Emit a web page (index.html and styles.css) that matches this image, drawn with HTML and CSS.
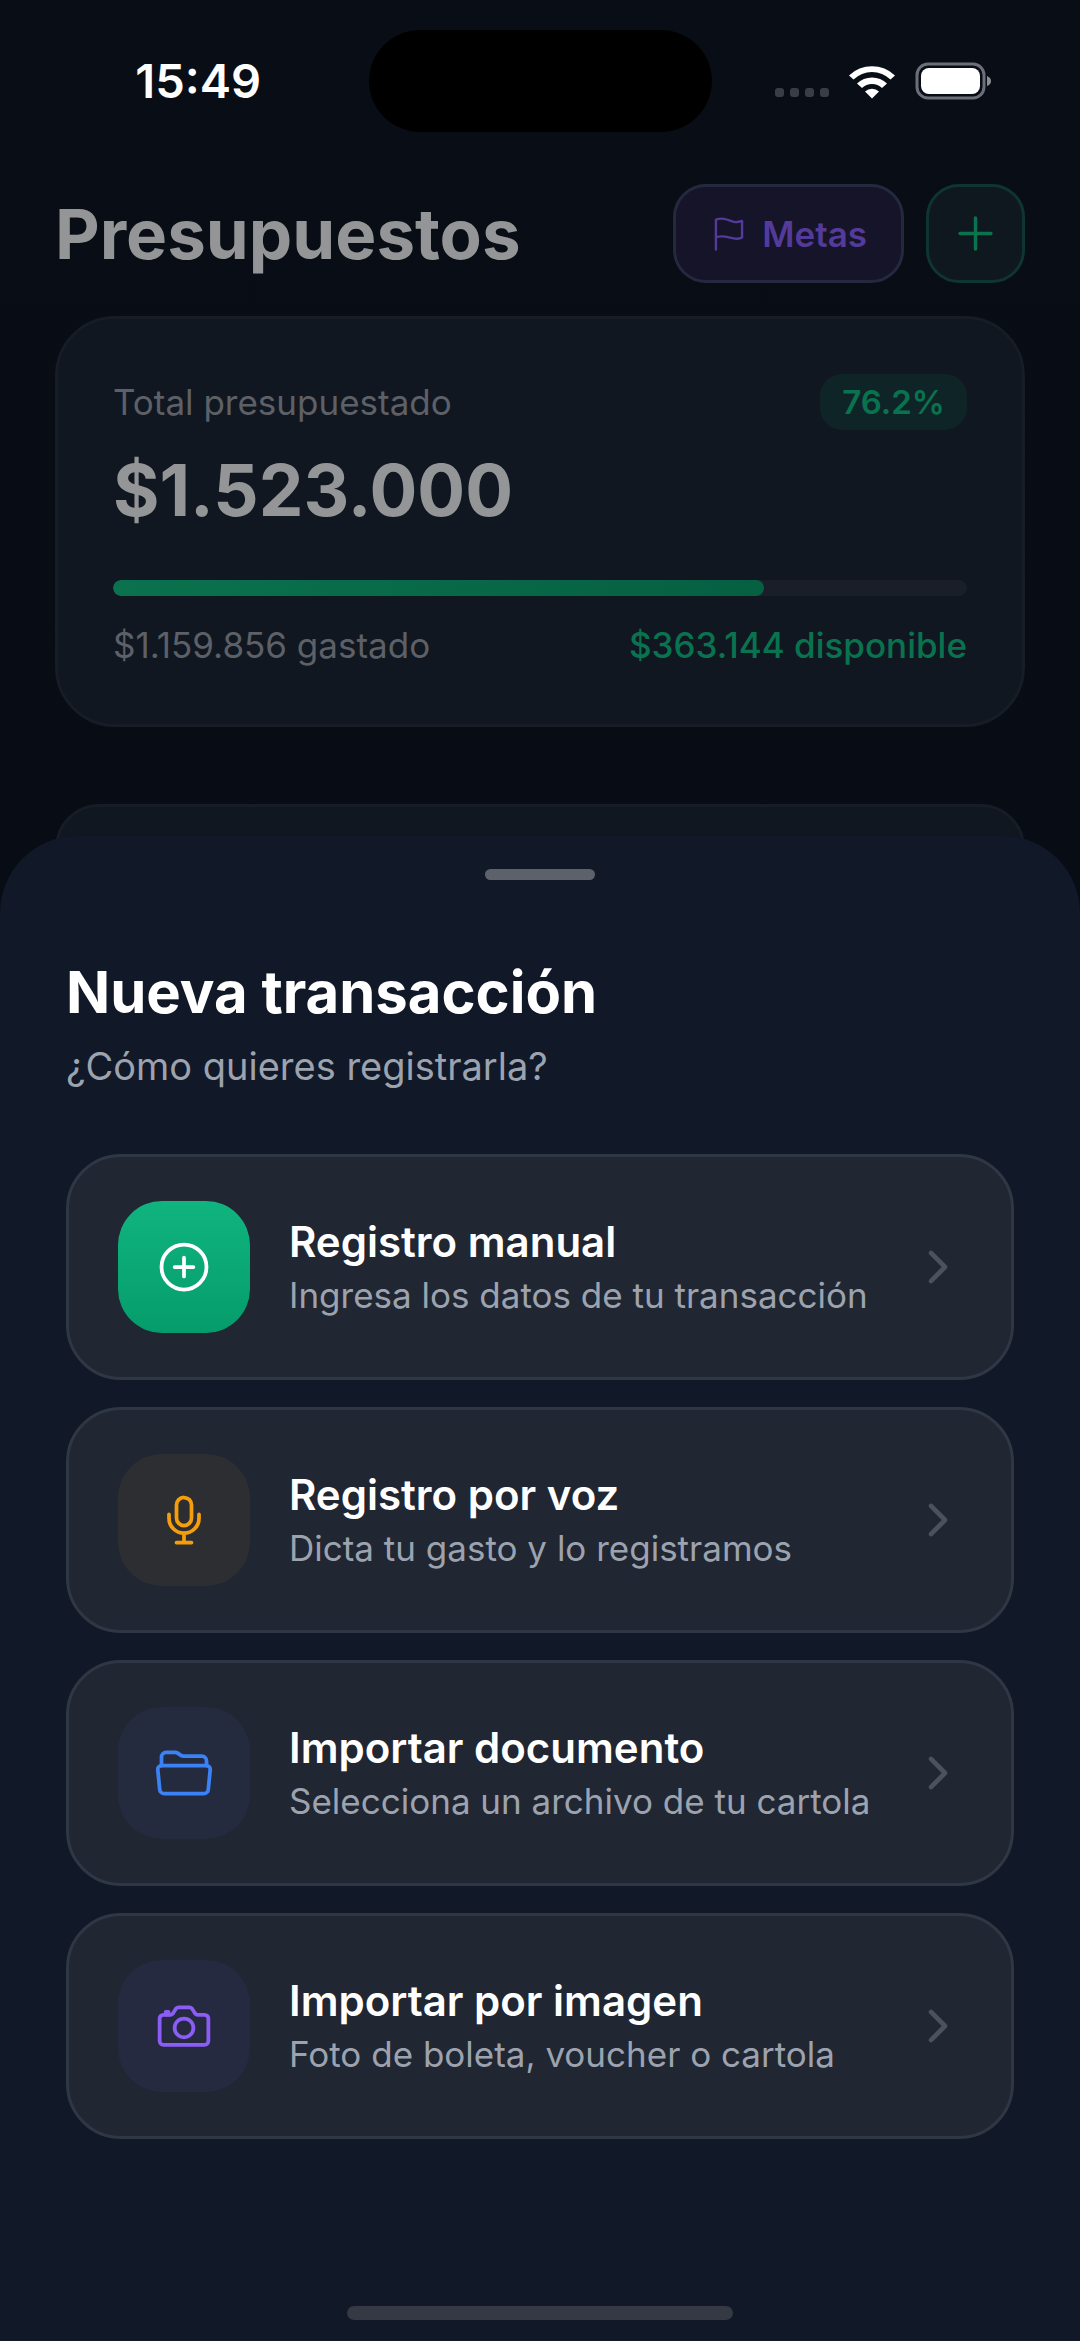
FILE: index.html
```html
<!DOCTYPE html>
<html lang="es">

<head>
    <meta charset="UTF-8">
    <meta name="viewport" content="width=device-width, initial-scale=1.0">
    <title>Presupuestos</title>
    <link rel="stylesheet" href="styles.css">
</head>

<body>
    <div class="status-bar">
        <span class="time">15:49</span>
        <div class="island"></div>
        <div class="status-icons">
            <div class="signal"><i></i><i></i><i></i><i></i></div>
            <svg class="wifi" viewBox="0 0 48 36">
                <path d="M1 12.5a33 33 0 0 1 46 0l-4.5 4a26.500 26.500 0 0 0-37 0z" />
                <path d="M9 20.500a21.500 21.500 0 0 1 30 0l-5 4.500a14.500 14.500 0 0 0-20 0z" />
                <path d="M17 28.500a10.500 10.500 0 0 1 14 0l-7 7z" />
            </svg>
            <svg class="battery" viewBox="0 0 78 38">
                <rect class="shell" x="2" y="2" width="67" height="34" rx="11" />
                <rect class="charge" x="6" y="6" width="59" height="26" rx="8" />
                <path class="tip" d="M72 14q4 1.500 4 5t-4 5z" />
            </svg>
        </div>
    </div>

    <main>
        <header>
            <h1>Presupuestos</h1>
            <button class="btn btn-goals">
                <svg class="icon" viewBox="0 0 512 512">
                    <path d="M80 464V68.140a8 8 0 0 1 4-6.900C91.810 56.660 112.920 48 160 48c64 0 145 48 192 48a199.530 199.530 0 0 0 77.230-15.770 2 2 0 0 1 2.770 1.850v219.360a4 4 0 0 1-2.390 3.650C421.370 308.700 392.330 320 352 320c-48 0-128-32-192-32s-80 16-80 16" />
                </svg>
                Metas
            </button>
            <button class="btn btn-add" aria-label="Agregar">
                <svg class="icon" viewBox="0 0 512 512">
                    <path d="M256 112v288M400 256H112" />
                </svg>
            </button>
        </header>

        <section class="card">
            <div class="row">
                <span class="muted">Total presupuestado</span>
                <span class="badge">76.2%</span>
            </div>
            <p class="amount">$1.523.000</p>
            <div class="bar">
                <div class="bar-fill" style="width: 76.2%"></div>
            </div>
            <div class="row">
                <span class="muted">$1.159.856 gastado</span>
                <span class="available">$363.144 disponible</span>
            </div>
        </section>

        <section class="card card-list"></section>
    </main>

    <div class="sheet" role="dialog" aria-labelledby="sheet-title">
        <div class="handle"></div>
        <h2 id="sheet-title">Nueva transacción</h2>
        <p class="subtitle">¿Cómo quieres registrarla?</p>

        <div class="options">
            <button class="option">
                <span class="tile manual">
                    <svg class="icon" viewBox="0 0 512 512">
                        <circle cx="256" cy="256" r="192" />
                        <path d="M256 176v160M336 256H176" />
                    </svg>
                </span>
                <span class="text">
                    <strong>Registro manual</strong>
                    <small>Ingresa los datos de tu transacción</small>
                </span>
                <svg class="icon chevron" viewBox="0 0 512 512"><path d="M184 112l144 144-144 144" /></svg>
            </button>
            <button class="option">
                <span class="tile voice">
                    <svg class="icon" viewBox="0 0 512 512">
                        <path d="M192 448h128M384 208v32c0 70.400-57.600 128-128 128s-128-57.600-128-128v-32M256 368v80" />
                        <path d="M256 64a63.680 63.680 0 0 0-64 64v111c0 35.200 29 65 64 65s64-29 64-65V128c0-36-28-64-64-64z" />
                    </svg>
                </span>
                <span class="text">
                    <strong>Registro por voz</strong>
                    <small>Dicta tu gasto y lo registramos</small>
                </span>
                <svg class="icon chevron" viewBox="0 0 512 512"><path d="M184 112l144 144-144 144" /></svg>
            </button>
            <button class="option">
                <span class="tile document">
                    <svg class="icon" viewBox="0 0 512 512">
                        <path d="M64 192v-72a40 40 0 0 1 40-40h75.890a40 40 0 0 1 22.190 6.720l27.840 18.560a40 40 0 0 0 22.190 6.720H408a40 40 0 0 1 40 40v40" />
                        <path d="M479.900 226.550L463.680 392a40 40 0 0 1-39.930 40H88.250a40 40 0 0 1-39.930-40L32.100 226.550A32 32 0 0 1 64 192h384.100a32 32 0 0 1 31.800 34.550z" />
                    </svg>
                </span>
                <span class="text">
                    <strong>Importar documento</strong>
                    <small>Selecciona un archivo de tu cartola</small>
                </span>
                <svg class="icon chevron" viewBox="0 0 512 512"><path d="M184 112l144 144-144 144" /></svg>
            </button>
            <button class="option">
                <span class="tile image">
                    <svg class="icon" viewBox="0 0 512 512">
                        <path d="M350.540 148.680l-26.620-42.060C318.310 100.080 310.620 96 302 96h-92c-8.620 0-16.310 4.080-21.920 10.620l-26.620 42.060C155.850 155.230 148.620 160 140 160H80a32 32 0 0 0-32 32v192a32 32 0 0 0 32 32h352a32 32 0 0 0 32-32V192a32 32 0 0 0-32-32h-59c-8.650 0-16.850-4.770-22.460-11.320z" />
                        <circle cx="256" cy="272" r="80" />
                        <path d="M124 158v-22h-24v22" />
                    </svg>
                </span>
                <span class="text">
                    <strong>Importar por imagen</strong>
                    <small>Foto de boleta, voucher o cartola</small>
                </span>
                <svg class="icon chevron" viewBox="0 0 512 512"><path d="M184 112l144 144-144 144" /></svg>
            </button>
        </div>

        <div class="home-indicator"></div>
    </div>
</body>

</html>
```
FILE: styles.css
```css
* {
    box-sizing: border-box;
    margin: 0;
    padding: 0;
}
body {
    min-height: 100vh;
    overflow: hidden;
    background: linear-gradient(#090e16, #080c14 40%);
    font-family: Inter, "Liberation Sans", sans-serif;
    font-size: 35px;
    line-height: 48px;
}
button {
    font: inherit;
    cursor: pointer;
}
.icon {
    fill: none;
    stroke: currentColor;
    stroke-width: 32;
    stroke-linecap: round;
    stroke-linejoin: round;
    flex: none;
}

/* status bar */
.status-bar {
    display: grid;
    grid-template-columns: 1fr 343px 1fr;
    align-items: center;
    padding-top: 30px;
    color: #fff;
}
.time {
    padding-left: 28px;
    text-align: center;
    font-size: 47px;
    font-weight: 600;
}
.island {
    height: 102px;
    border-radius: 51px;
    background: #000;
}
.status-icons {
    display: flex;
    align-items: center;
    justify-content: flex-end;
    gap: 19px;
    padding-right: 87px;
}
.signal {
    display: flex;
    gap: 6px;
    padding-top: 23px;
}
.signal i {
    width: 9px;
    height: 9px;
    border-radius: 3px;
    background: #393d47;
}
.wifi {
    width: 48px;
    height: 36px;
    fill: #fff;
}
.battery {
    width: 78px;
    height: 38px;
}
.shell {
    fill: none;
    stroke: #6b6f7a;
    stroke-width: 3;
}
.charge {
    fill: #fff;
}
.tip {
    fill: #8b8e95;
}

/* budgets */
main {
    padding: 52px 55px 0;
}
header {
    display: flex;
    align-items: center;
    gap: 22px;
    margin-bottom: 33px;
}
h1 {
    flex: 1;
    font-size: 69px;
    line-height: 88px;
    color: #949597;
}
.btn {
    display: flex;
    align-items: center;
    justify-content: center;
    height: 99px;
    border: 3px solid;
    border-radius: 33px;
}
.btn-goals {
    gap: 14px;
    padding: 0 34px;
    font-weight: 600;
    color: #533a9b;
    background: #161428;
    border-color: #242940;
}
.btn-goals .icon {
    width: 38px;
    height: 38px;
}
.btn-add {
    width: 99px;
    color: #09734f;
    background: #0f181f;
    border-color: #0e3530;
}
.btn-add .icon {
    width: 55px;
    height: 55px;
}
.card {
    padding: 55px;
    margin-bottom: 77px;
    border: 3px solid #171c26;
    border-radius: 60px;
    background: #101720;
}
.card-list {
    min-height: 200px;
    border-radius: 44px;
}
.row {
    display: flex;
    align-items: center;
    justify-content: space-between;
}
.muted {
    color: #5d6067;
}
.badge {
    padding: 4px 22px;
    border-radius: 22px;
    font-size: 33px;
    font-weight: 600;
    color: #09734f;
    background: #0f2427;
}
.amount {
    margin: 13px 0 43px;
    font-size: 71px;
    font-weight: 700;
    line-height: 94px;
    color: #949597;
}
.bar {
    height: 16px;
    margin-bottom: 25px;
    border-radius: 8px;
    background: #191e29;
    overflow: hidden;
}
.bar-fill {
    height: 100%;
    border-radius: 8px;
    background: linear-gradient(90deg, #0a724e, #056042);
}
.available {
    font-weight: 500;
    color: #09734f;
}

/* bottom sheet */
.sheet {
    position: fixed;
    left: 0;
    right: 0;
    bottom: 0;
    padding: 33px 66px 21px;
    border-radius: 77px 77px 0 0;
    background: #111827;
}
.handle {
    width: 110px;
    height: 11px;
    margin: 0 auto 74px;
    border-radius: 6px;
    background: #5d6169;
}
h2 {
    font-size: 58px;
    line-height: 76px;
    color: #fff;
}
.subtitle {
    margin: 11px 0 63px;
    font-size: 38px;
    line-height: 50px;
    color: #9ca3af;
}
.options {
    display: flex;
    flex-direction: column;
    gap: 27px;
}
.option {
    display: flex;
    align-items: center;
    height: 226px;
    padding: 0 48px 0 49px;
    border: 3px solid #303744;
    border-radius: 55px;
    background: #202632;
    text-align: left;
}
.tile {
    display: flex;
    align-items: center;
    justify-content: center;
    width: 132px;
    height: 132px;
    margin-right: 39px;
    border-radius: 44px;
}
.tile .icon {
    width: 60px;
    height: 60px;
}
.manual {
    color: #fff;
    background: linear-gradient(#10b47e, #059c6b);
}
.voice {
    color: #f59e0b;
    background: #2d2e31;
}
.document {
    color: #3b82f6;
    background: #242b3f;
}
.image {
    color: #8b5cf6;
    background: #262a40;
}
.text {
    flex: 1;
}
.text strong,
.text small {
    display: block;
}
.text strong {
    font-size: 42px;
    font-weight: 600;
    line-height: 56px;
    color: #fff;
}
.text small {
    font-size: 35px;
    line-height: 50px;
    color: #9ca3af;
}
.chevron {
    width: 50px;
    height: 50px;
    stroke-width: 48;
    color: #4b515d;
}
.home-indicator {
    width: 386px;
    height: 14px;
    margin: 167px auto 0;
    border-radius: 7px;
    background: #343943;
}
```
